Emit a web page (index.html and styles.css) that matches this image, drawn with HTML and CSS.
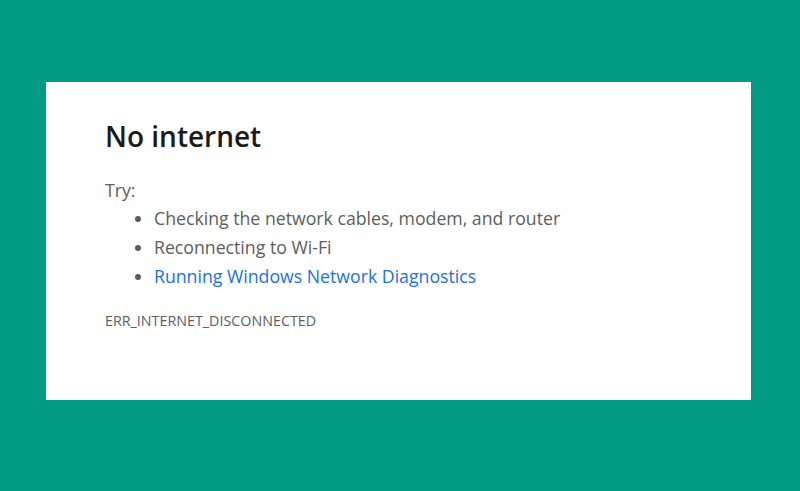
FILE: index.html
```html
<!DOCTYPE html>
<html>
<head>
<meta charset="utf-8">
<link rel="stylesheet" href="styles.css">
</head>
<body>
<main class="card">
  <h1 class="title">No internet</h1>
  <p class="try">Try:</p>
  <ul class="list">
    <li>Checking the network cables, modem, and router</li>
    <li>Reconnecting to Wi-Fi</li>
    <li><a class="link" href="#">Running Windows Network Diagnostics</a></li>
  </ul>
  <p class="code">ERR_INTERNET_DISCONNECTED</p>
</main>
</body>
</html>
```
FILE: styles.css
```css
html, body {
  margin: 0;
  padding: 0;
}
body {
  background: #019a82;
  width: 800px;
  height: 491px;
  padding-top: 82px;
  padding-left: 46px;
  box-sizing: border-box;
  font-family: "Open Sans", "Noto Sans", sans-serif;
}
.card {
  background: #ffffff;
  width: 705px;
  height: 318px;
  box-sizing: border-box;
  padding: 28px 59px 0;
}
.title {
  margin: 0;
  font-size: 28px;
  font-weight: 600;
  color: #1b1b1b;
  line-height: 52px;
}
.try {
  margin: 14px 0 0;
  font-size: 17.7px;
  line-height: 29px;
  color: #5d5d5d;
}
.list {
  margin: -1px 0 0;
  padding-left: 49px;
  font-size: 17.7px;
  line-height: 29px;
  color: #5d5d5d;
}
.list li::marker {
  color: #5d5d5d;
}
.link {
  color: #1a6fe8;
  text-decoration: none;
}
.code {
  margin: 20px 0 0;
  font-size: 14.3px;
  line-height: 20px;
  color: #5d5d5d;
}
```
